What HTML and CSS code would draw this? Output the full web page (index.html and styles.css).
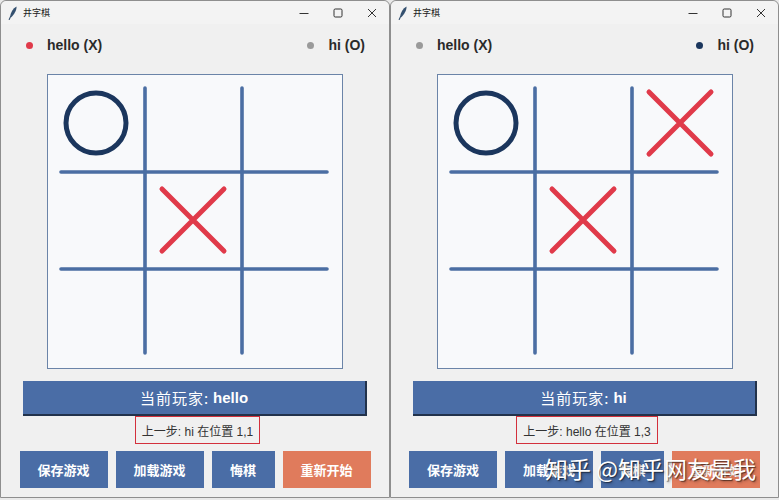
FILE: index.html
```html
<!DOCTYPE html>
<html lang="zh">
<head>
<meta charset="utf-8">
<title>井字棋</title>
<link rel="stylesheet" href="styles.css">
</head>
<body>
<div class="screen">
  <div class="window win-left">
    <div class="titlebar">
      <svg class="feather" width="10" height="14" viewBox="0 0 10 14"><path d="M8.5 0.5 C5 2.5 2.5 6.5 2 11 L3.2 11.3 C6 8.5 8.8 4.5 8.5 0.5Z" fill="#34506f"/><path d="M2.6 10.5 L1.2 13.5" stroke="#34506f" stroke-width="1.1" stroke-linecap="round"/></svg>
      <span class="title">井字棋</span>
      <div class="controls">
        <span class="ctl"><svg width="10" height="10" viewBox="0 0 10 10"><path d="M0.5 5.5 H9.5" stroke="#333" stroke-width="1"/></svg></span>
        <span class="ctl"><svg width="10" height="10" viewBox="0 0 10 10"><rect x="1" y="1" width="8" height="8" rx="1.2" fill="none" stroke="#333" stroke-width="1"/></svg></span>
        <span class="ctl"><svg width="10" height="10" viewBox="0 0 10 10"><path d="M1 1 L9 9 M9 1 L1 9" stroke="#333" stroke-width="1"/></svg></span>
      </div>
    </div>
    <div class="players">
      <div class="player"><span class="dot dot-x"></span><span class="pname">hello (X)</span></div>
      <div class="player"><span class="dot dot-idle"></span><span class="pname">hi (O)</span></div>
    </div>
    <div class="board">
      <svg width="294" height="293" viewBox="0 0 294 293">
        <g stroke="#4b6ea3" stroke-width="3.6" stroke-linecap="round">
          <path d="M97 13 V278 M194 13 V278 M13 97 H279 M13 194 H279"/>
        </g>
        <circle cx="48" cy="48" r="30" fill="none" stroke="#1b365d" stroke-width="5"/>
        <path d="M114 114 L176 176 M176 114 L114 176" stroke="#e03a4a" stroke-width="5" stroke-linecap="round"/>
      </svg>
    </div>
    <div class="current">当前玩家: <b>hello</b></div>
    <div class="lastmove">上一步: hi 在位置 1,1</div>
    <div class="buttons">
      <button class="btn btn-blue">保存游戏</button>
      <button class="btn btn-blue">加载游戏</button>
      <button class="btn btn-blue btn-small">悔棋</button>
      <button class="btn btn-orange">重新开始</button>
    </div>
  </div>

  <div class="window win-right">
    <div class="titlebar">
      <svg class="feather" width="10" height="14" viewBox="0 0 10 14"><path d="M8.5 0.5 C5 2.5 2.5 6.5 2 11 L3.2 11.3 C6 8.5 8.8 4.5 8.5 0.5Z" fill="#34506f"/><path d="M2.6 10.5 L1.2 13.5" stroke="#34506f" stroke-width="1.1" stroke-linecap="round"/></svg>
      <span class="title">井字棋</span>
      <div class="controls">
        <span class="ctl"><svg width="10" height="10" viewBox="0 0 10 10"><path d="M0.5 5.5 H9.5" stroke="#333" stroke-width="1"/></svg></span>
        <span class="ctl"><svg width="10" height="10" viewBox="0 0 10 10"><rect x="1" y="1" width="8" height="8" rx="1.2" fill="none" stroke="#333" stroke-width="1"/></svg></span>
        <span class="ctl"><svg width="10" height="10" viewBox="0 0 10 10"><path d="M1 1 L9 9 M9 1 L1 9" stroke="#333" stroke-width="1"/></svg></span>
      </div>
    </div>
    <div class="players">
      <div class="player"><span class="dot dot-idle"></span><span class="pname">hello (X)</span></div>
      <div class="player"><span class="dot dot-o"></span><span class="pname">hi (O)</span></div>
    </div>
    <div class="board">
      <svg width="294" height="293" viewBox="0 0 294 293">
        <g stroke="#4b6ea3" stroke-width="3.6" stroke-linecap="round">
          <path d="M97 13 V278 M194 13 V278 M13 97 H279 M13 194 H279"/>
        </g>
        <circle cx="48" cy="48" r="30" fill="none" stroke="#1b365d" stroke-width="5"/>
        <path d="M114 114 L176 176 M176 114 L114 176" stroke="#e03a4a" stroke-width="5" stroke-linecap="round"/>
        <path d="M211 17 L273 79 M273 17 L211 79" stroke="#e03a4a" stroke-width="5" stroke-linecap="round"/>
      </svg>
    </div>
    <div class="current">当前玩家: <b>hi</b></div>
    <div class="lastmove">上一步: hello 在位置 1,3</div>
    <div class="buttons">
      <button class="btn btn-blue">保存游戏</button>
      <button class="btn btn-blue">加载游戏</button>
      <button class="btn btn-blue btn-small">悔棋</button>
      <button class="btn btn-orange">重新开始</button>
    </div>
    <div class="watermark">知乎 @知乎网友是我</div>
  </div>
</div>
</body>
</html>
```

FILE: styles.css
```css
* { box-sizing: border-box; }
body {
  margin: 0;
  background: #e9e9e9;
  font-family: "Liberation Sans", "Noto Sans CJK SC", sans-serif;
}
.screen {
  display: flex;
  width: 779px;
  height: 500px;
  overflow: hidden;
}
.window {
  height: 498px;
  border: 1px solid #8e8e8e;
  border-radius: 6px 6px 0 0;
  background: #f0f0f0;
  display: flex;
  flex-direction: column;
  align-items: center;
  position: relative;
}
.win-left { width: 390px; }
.win-right { flex: 1; }

.titlebar {
  align-self: stretch;
  height: 23px;
  display: flex;
  align-items: center;
  padding-left: 7px;
  background: #f3f3f3;
  border-radius: 6px 6px 0 0;
}
.feather { display: block; margin-right: 5px; }
.title {
  font-family: "Noto Sans CJK SC", sans-serif;
  font-size: 9px;
  color: #222;
}
.controls {
  margin-left: auto;
  display: flex;
  height: 23px;
}
.ctl {
  width: 34px;
  display: flex;
  align-items: center;
  justify-content: center;
}
.ctl svg { display: block; }

.players {
  align-self: stretch;
  margin-top: 6px;
  height: 30px;
  padding: 0 24px 0 25px;
  display: flex;
  justify-content: space-between;
  align-items: center;
}
.player {
  display: flex;
  align-items: center;
  gap: 14px;
}
.dot {
  width: 7px;
  height: 7px;
  border-radius: 50%;
}
.dot-x { background: #e03a4a; }
.dot-o { background: #1b365d; }
.dot-idle { background: #9a9a9a; }
.pname {
  font-size: 14px;
  font-weight: bold;
  color: #2a2a2a;
}

.board {
  margin-top: 14px;
  width: 296px;
  height: 295px;
  border: 1px solid #6b84a8;
  background: #f8f9fb;
}
.board svg { display: block; }

.current {
  margin-top: 12px;
  width: 344px;
  height: 35px;
  background: #4a6da6;
  border-right: 2px solid #22324b;
  border-bottom: 2px solid #22324b;
  color: #fff;
  font-family: "Noto Sans CJK SC", sans-serif;
  font-size: 15px;
  letter-spacing: 1px;
  display: flex;
  align-items: center;
  justify-content: center;
}
.current b {
  font-family: "Liberation Sans", sans-serif;
  font-weight: bold;
  letter-spacing: 0;
  margin-left: 4px;
}

.lastmove {
  height: 28px;
  padding: 0 6px;
  border: 1.5px solid #d3303c;
  font-family: "Liberation Sans", "Noto Sans CJK SC", sans-serif;
  font-size: 12px;
  color: #333;
  display: flex;
  align-items: center;
  margin-left: 5px;
}

.buttons {
  margin-top: 7px;
  display: flex;
  gap: 8px;
}
.btn {
  height: 37px;
  width: 88px;
  border: none;
  padding: 0;
  color: #fff;
  font-family: "Noto Sans CJK SC", sans-serif;
  font-weight: bold;
  font-size: 13px;
}
.btn-small { width: 63px; }
.btn-blue { background: #4a6da6; }
.btn-orange { background: #e07b5c; }

.watermark {
  position: absolute;
  left: 154px;
  top: 450px;
  font-family: "Noto Sans CJK SC", sans-serif;
  font-size: 23px;
  color: #fff;
  white-space: nowrap;
  text-shadow: 1px 1px 1px rgba(0,0,0,0.55), 2px 2px 3px rgba(0,0,0,0.25);
}
```
